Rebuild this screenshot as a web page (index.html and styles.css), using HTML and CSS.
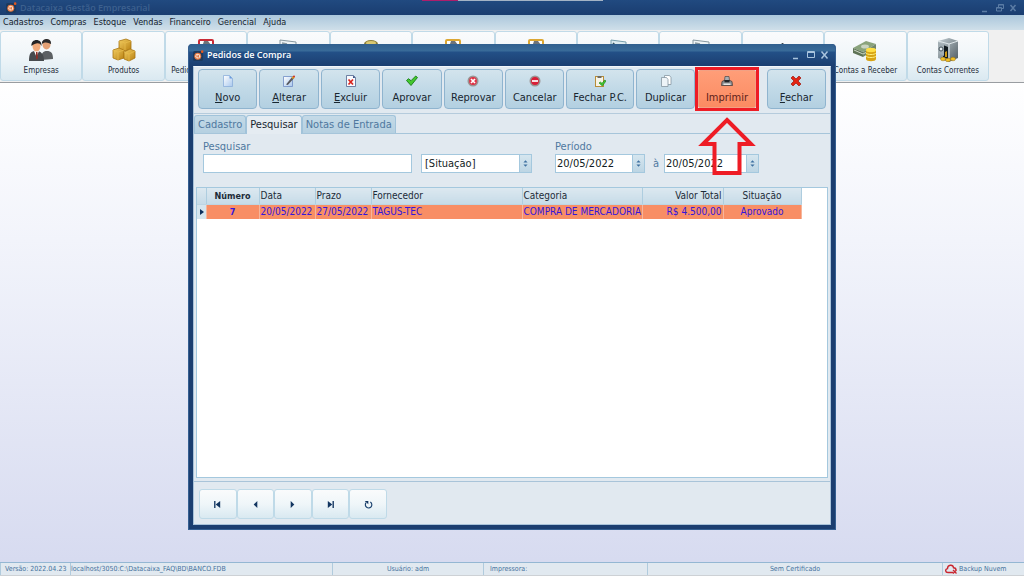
FILE: index.html
```html
<!DOCTYPE html>
<html lang="pt-BR">
<head>
<meta charset="utf-8">
<title>Datacaixa Gestão Empresarial</title>
<link rel="stylesheet" href="styles.css">
</head>
<body>
<svg class="defs" aria-hidden="true">
  <defs>
    <linearGradient id="gold" x1="0" y1="0" x2="1" y2="1"><stop offset="0" stop-color="#f3cf63"/><stop offset="1" stop-color="#b87f10"/></linearGradient>
    <linearGradient id="steel" x1="0" y1="0" x2="1" y2="1"><stop offset="0" stop-color="#c5d0d5"/><stop offset="1" stop-color="#4d5a61"/></linearGradient>
    <linearGradient id="paper" x1="0" y1="0" x2="1" y2="1"><stop offset="0" stop-color="#ffffff"/><stop offset="1" stop-color="#a9c8ee"/></linearGradient>
    <symbol id="logo" viewBox="0 0 12 12"><rect x="0" y="1" width="11" height="11" rx="2" fill="#1d3a5e"/><circle cx="5.2" cy="6.8" r="3.8" fill="#e9773e"/><circle cx="5.2" cy="6.8" r="2.6" fill="#fbe3d3"/><path d="M4.3 5.2v3.2M6 5.2v3.2M4 6.8h2.6" stroke="#dc6a35" stroke-width=".8"/><circle cx="10" cy="1.8" r="1.4" fill="#e2571f"/></symbol>
    <symbol id="clip" viewBox="0 0 24 24"><rect x="5" y="2" width="14" height="20" rx="1" fill="#fff" stroke="currentColor" stroke-width="2"/><path d="M9 6l1-3h4l3 4z" fill="#6e747a"/></symbol>
    <symbol id="sheet" viewBox="0 0 24 24"><path d="M4 2l16 2v18H4z" fill="#eef4f6" stroke="#8798a0"/><path d="M6 5l5 1M13 7h5M6 10h12" stroke="#8798a0" stroke-width="1.5"/></symbol>
    <symbol id="spin" viewBox="0 0 6 8"><path d="M3 0L5.5 2.8h-5zM3 8L.5 5.2h5z" fill="#3e70a0"/></symbol>
  </defs>
</svg>

<header class="app-title">
  <svg class="logo"><use href="#logo"/></svg>
  <h1>Datacaixa Gestão Empresarial</h1>
  <svg class="win-controls dim" viewBox="0 0 36 10"><path d="M0 8.500h5" stroke-width="1.500"/><path d="M16.500 4V1.500h5v4h-2M14.500 4.500h5v3.500h-5zM14.500 5h5M16.500 2h5" fill="none"/><path d="M28.500 2l5 6M33.500 2l-5 6" stroke-width="1.500"/></svg>
  <span class="share-strip"></span>
</header>

<nav class="menu">
  <a href="#">Cadastros</a><a href="#">Compras</a><a href="#">Estoque</a><a href="#">Vendas</a><a href="#">Financeiro</a><a href="#">Gerencial</a><a href="#">Ajuda</a>
</nav>

<div class="toolbar">
  <button type="button">
    <svg viewBox="0 0 24 24"><path d="M12 22c0-7 2-9 6-9s6 2 6 8z" fill="#5c6063"/><ellipse cx="17.500" cy="6.500" rx="4" ry="5" fill="#e3a176"/><path d="M13 6c-1-6 10-7 9 0-3-1-5-3-9 0z" fill="#2b2a2b"/><path d="M0 23c0-8 2-10 7-10s8 3 8 10z" fill="#474b4e"/><path d="M5 13l2.500 6 2.500-6z" fill="#fff"/><path d="M7 14h1.500l.5 6-1.200 2L7 20z" fill="#8c3029"/><ellipse cx="7.500" cy="8" rx="4" ry="5.500" fill="#f0aa7b"/><path d="M2.500 8c-1-8 11-8 10 0-2-4-6-3-10 0z" fill="#242426"/></svg>
    Empresas</button>
  <button type="button">
    <svg viewBox="0 0 24 24"><g fill="url(#gold)" stroke="#a87510" stroke-width=".8"><path d="M7 3l7-2 5 2v8l-6 2-6-2z"/><path d="M1 12l6-2 5 2v8l-6 2-5-2z"/><path d="M12 14l6-3 5 2v7l-6 3-5-2z"/></g><path d="M7 3l6 2 6-2M13 5v7M1 12l5 2 6-2M6 14v8M12 14l5 2 6-3M17 16v7" fill="none" stroke="#e9bd4d" stroke-width=".8"/></svg>
    Produtos</button>
  <button type="button"><svg class="red" viewBox="0 0 24 24"><use href="#clip"/></svg>Pedidos de Compra</button>
  <button type="button" aria-label="Documento"><svg><use href="#sheet"/></svg></button>
  <button type="button" aria-label="Moedas"><svg viewBox="0 0 24 24"><ellipse cx="12" cy="6" rx="7" ry="4" fill="#8c7f3a"/><ellipse cx="12" cy="5" rx="5" ry="2" fill="#d9c872"/></svg></button>
  <button type="button" aria-label="Lista"><svg class="amber"><use href="#clip"/></svg></button>
  <button type="button" aria-label="Lista de itens"><svg class="amber"><use href="#clip"/></svg></button>
  <button type="button" aria-label="Nota"><svg viewBox="0 0 24 24"><path d="M5 2l15 2v18H5z" fill="#dcebf0" stroke="#78a0ae"/><path d="M7 5l3 3 8-1" stroke="#37545e" stroke-width="1.500" fill="none"/></svg></button>
  <button type="button" aria-label="Relatório"><svg><use href="#sheet"/></svg></button>
  <button type="button" aria-label="Contas"><svg viewBox="0 0 24 24"><path d="M4 14l7-9h1l8 9z" fill="#3b454c"/></svg></button>
  <button type="button">
    <svg viewBox="0 0 24 24"><path d="M0 10l13-7 10 3-13 8z" fill="#8aa37c"/><path d="M0 10l10 4v5L0 15z" fill="#5e7356"/><path d="M10 14l13-8v5l-13 8z" fill="#71866a"/><ellipse cx="12" cy="8.500" rx="4" ry="2" fill="#c9d4c0"/><path d="M1 12l9 4 6-3" stroke="#ccd6c4" fill="none"/><path d="M13 12v9c0 3 10 3 10 0v-9z" fill="#d8a414"/><path d="M13 15c1 2 9 2 10 0M13 18c1 2 9 2 10 0" stroke="#fff07e" fill="none"/><ellipse cx="18" cy="12" rx="5" ry="2.200" fill="#ffdf45"/></svg>
    Contas a Receber</button>
  <button type="button">
    <svg viewBox="0 0 24 24"><path d="M2 3l11-3 9 3v17l-9 4-11-4z" fill="url(#steel)"/><path d="M2 3l11 3 9-3M13 6v17" stroke="#dfe7ea" fill="none"/><path d="M7 7l5 2v12l-5-2z" fill="#111a1e"/><path d="M2 4l6 3v11l-6-3z" fill="#a1adb3"/><circle cx="5" cy="11" r="2" fill="#e7eef0" stroke="#44525a"/><path d="M9 14l2-1v6H9z" fill="#c99411"/><g fill="#f1bf24" stroke="#9b6e08" stroke-width=".5"><ellipse cx="7" cy="21" rx="2.500" ry="1.800"/><ellipse cx="12" cy="22" rx="2.500" ry="1.800"/><ellipse cx="17" cy="21" rx="2.500" ry="1.800"/></g></svg>
    Contas Correntes</button>
</div>

<main class="desktop"></main>

<section class="dialog" role="dialog" aria-labelledby="dialog-title">
  <header class="dialog-title">
    <svg class="logo"><use href="#logo"/></svg>
    <h2 id="dialog-title">Pedidos de Compra</h2>
    <svg class="win-controls" viewBox="0 0 36 10"><path d="M0 8.500h5" stroke-width="1.500"/><path d="M14.500 1.500h7v6h-7zM14.500 2.500h7" fill="none"/><path d="M28.500 1.500l6 7M34.500 1.500l-6 7" stroke-width="1.500"/></svg>
  </header>

  <div class="dialog-body">
    <div class="actions">
      <button type="button"><svg viewBox="0 0 12 12"><path d="M1.500.5h6l3 3v8h-9z" fill="url(#paper)" stroke="#8cafdb" stroke-width=".8"/><path d="M7.500.5v3h3z" fill="#6b9bdc"/></svg><span><u>N</u>ovo</span></button>
      <button type="button"><svg viewBox="0 0 12 12"><path d="M.5 1.500h9v10h-9z" fill="url(#paper)" stroke="#6e8cc4" stroke-width=".8"/><path d="M3 9.500L9.500 1.500l1.800 1.400-6.500 7.200z" fill="#58595f"/><path d="M8.500 2.800L10 1l1.600 1.400-1.500 1.700z" fill="#e5a327"/><circle cx="11" cy="1.500" r="1" fill="#cf2c1f"/></svg><span><u>A</u>lterar</span></button>
      <button type="button"><svg viewBox="0 0 12 12"><path d="M1.500.5h7l2 2v9h-9z" fill="#f8fafe" stroke="#51648f" stroke-width=".8"/><path d="M8 .5v2.500h2.500z" fill="#3b5287"/><path d="M3.500 4.500l4.500 5M8 4.500l-4.500 5" stroke="#d8231d" stroke-width="1.700"/></svg><span><u>E</u>xcluir</span></button>
      <button type="button"><svg viewBox="0 0 12 12"><path d="M.5 5.500l2-1.800 2.500 2L9.700 1l1.800 1.500L5 10.500z" fill="#43c82e" stroke="#197b16" stroke-width=".9"/></svg><span>Aprovar</span></button>
      <button type="button"><svg viewBox="0 0 12 12"><circle cx="6" cy="6" r="5.500" fill="#9a9493"/><circle cx="6" cy="6" r="3.900" fill="#df3346"/><path d="M4 4l4 4M8 4L4 8" stroke="#fff" stroke-width="1.700"/></svg><span>Reprovar</span></button>
      <button type="button"><svg viewBox="0 0 12 12"><circle cx="6" cy="6" r="5.500" fill="#9a9493"/><circle cx="6" cy="6" r="3.900" fill="#d91f37"/><path d="M3 6h6" stroke="#fff" stroke-width="1.700"/></svg><span>Cancelar</span></button>
      <button type="button" class="wide"><svg viewBox="0 0 12 12"><rect x="1.500" y="1.500" width="8" height="10" fill="#f7f4e6" stroke="#b88d38"/><path d="M3.500 3V1h4v2z" fill="#6f6b62"/><path d="M5 8l1.300-1L8 8.300 10.800 5 12 6 8.300 11z" fill="#43c82e" stroke="#197b16" stroke-width=".6"/></svg><span>Fechar P.C.</span></button>
      <button type="button"><svg viewBox="0 0 12 12"><path d="M4.500.5h5l1.500 2v7H4.500z" fill="#fff" stroke="#8697a2" stroke-width=".8"/><path d="M1.500 2.500h5l1.500 2v7H1.500z" fill="#eef4f8" stroke="#8697a2" stroke-width=".8"/></svg><span>Duplicar</span></button>
      <div class="highlight">
        <button type="button"><svg viewBox="0 0 12 12"><path d="M4 1.500h4l.5 4h-5z" fill="#a9adb2" stroke="#474747" stroke-width=".7"/><path d="M1 6.500l2-1h6l2 1 .5 4H.5z" fill="#8d8f92" stroke="#3c3433" stroke-width=".7"/><path d="M3.500 5h5v2.300h-5z" fill="#26262a"/><path d="M2.500 8.500h7v1.500h-7z" fill="#e6e6e6"/></svg><span>Imprimir</span></button>
        <svg class="arrow" viewBox="0 0 62 60"><path d="M31 4L55 28H43.500V57h-25V28H7z" fill="none" stroke="#ee1c25" stroke-width="4"/></svg>
      </div>
      <button type="button"><svg viewBox="0 0 12 12"><path d="M1 3L3 1l3 3 3-3 2 2-3 3 3 3-2 2-3-3-3 3-2-2 3-3z" fill="#e32413" stroke="#9d170b" stroke-width=".7"/></svg><span><u>F</u>echar</span></button>
    </div>

    <div class="tabs" role="tablist">
      <button type="button" role="tab">Cadastro</button>
      <button type="button" role="tab" class="active" aria-selected="true">Pesquisar</button>
      <button type="button" role="tab">Notas de Entrada</button>
    </div>

    <div class="panel">
      <form class="filters">
        <div class="field search"><label for="q">Pesquisar</label><input id="q" type="text"></div>
        <div class="field status"><div class="box"><select aria-label="Situação"><option>[Situação]</option></select><svg class="spin"><use href="#spin"/></svg></div></div>
        <div class="field from"><label for="from">Período</label><div class="box"><input id="from" type="text" value="20/05/2022"><button type="button" class="spin" aria-label="Ajustar data inicial"><svg><use href="#spin"/></svg></button></div></div>
        <label class="until" for="to">à</label>
        <div class="field to"><div class="box"><input id="to" type="text" value="20/05/2022"><button type="button" class="spin" aria-label="Ajustar data final"><svg><use href="#spin"/></svg></button></div></div>
      </form>

      <div class="grid">
        <table>
          <colgroup><col class="c-mark"><col class="c-num"><col class="c-date"><col class="c-date"><col class="c-supplier"><col class="c-category"><col class="c-value"><col class="c-status"></colgroup>
          <thead><tr><th></th><th class="num">Número</th><th>Data</th><th>Prazo</th><th>Fornecedor</th><th>Categoria</th><th class="value">Valor Total</th><th class="center">Situação</th></tr></thead>
          <tbody><tr><td class="mark"><svg viewBox="0 0 4 6"><path d="M0 0l4 3-4 3z" fill="#0b2f5c"/></svg></td><td class="num">7</td><td>20/05/2022</td><td>27/05/2022</td><td>TAGUS-TEC</td><td>COMPRA DE MERCADORIA</td><td class="value">R$ 4.500,00</td><td class="center">Aprovado</td></tr></tbody>
        </table>
      </div>
    </div>

    <div class="pager">
      <button type="button" aria-label="Primeiro"><svg viewBox="0 0 10 10"><path d="M2 1v8" stroke="#123560" stroke-width="1.500"/><path d="M8 1v8L3 5z"/></svg></button>
      <button type="button" aria-label="Anterior"><svg viewBox="0 0 10 10"><path d="M7 1v8L3 5z"/></svg></button>
      <button type="button" aria-label="Próximo"><svg viewBox="0 0 10 10"><path d="M3 1v8l4-4z"/></svg></button>
      <button type="button" aria-label="Último"><svg viewBox="0 0 10 10"><path d="M8 1v8" stroke="#123560" stroke-width="1.500"/><path d="M2 1v8l5-4z"/></svg></button>
      <button type="button" aria-label="Atualizar"><svg viewBox="0 0 10 10"><path d="M7 2.200A3.600 3.600 0 1 1 2.300 3" fill="none" stroke="#1d4470" stroke-width="1.300"/><path d="M.8 1h4v3.800z"/></svg></button>
    </div>
  </div>
</section>

<footer class="status-bar">
  <span class="s-version">Versão: 2022.04.23</span>
  <span class="s-path">localhost/3050:C:\Datacaixa_FAQ\BD\BANCO.FDB</span>
  <span class="s-user">Usuário: adm</span>
  <span class="s-printer">Impressora:</span>
  <span class="s-cert">Sem Certificado</span>
  <span class="s-backup"><svg viewBox="0 0 12 10"><path d="M8 8.500H3C0 8.500 0 5 2.500 4.600 2.500.5 8 0 8.500 3.700c2 0 2.500 1.300 2.500 2.300" fill="none" stroke="#c9262f" stroke-width="1.400"/><path d="M8 6l3.500 3.500M11.500 6L8 9.500" stroke="#c9262f" stroke-width="1.300"/></svg>Backup Nuvem</span>
</footer>
</body>
</html>
```
FILE: styles.css
```css
* { box-sizing: border-box; }

body {
  margin: 0;
  min-height: 100vh;
  display: flex;
  flex-direction: column;
  position: relative;
  font-family: "DejaVu Sans Condensed", "DejaVu Sans", sans-serif;
  font-size: 9px;
  color: #1c2b38;
  background: linear-gradient(#ffffff 80px, #f2f4fb 240px, #d7dbf0 560px);
}

button, input, select { font: inherit; color: inherit; margin: 0; }
h1, h2 { margin: 0; font-family: "Open Sans", "Noto Sans", sans-serif; font-size: 9px; font-weight: 600; line-height: 12px; }
.defs { position: absolute; width: 0; height: 0; }

.app-title {
  position: relative;
  display: flex;
  align-items: center;
  height: 15px;
  padding: 0 6px;
  background: linear-gradient(#214a80, #1a3d70);
}
.app-title h1 { color: #3d618f; }
.logo { width: 11px; height: 11px; flex: none; margin-right: 3px; }
.win-controls { width: 36px; height: 10px; margin-left: auto; stroke: #a9c4de; }
.win-controls.dim { stroke: #5b7ca5; }
.share-strip {
  position: absolute;
  top: 0;
  left: 422px;
  width: 181px;
  height: 1px;
  background: linear-gradient(90deg, #ad1e6b 36px, #a3b3c5 36px);
}

.menu {
  display: flex;
  gap: 7px;
  height: 15px;
  padding: 0 3px;
  line-height: 15px;
  background: linear-gradient(#abc7dc, #cfdfe9);
}
.menu a { color: #14212c; text-decoration: none; }

.toolbar {
  display: flex;
  height: 53px;
  padding: 1px 35px 1px 0;
  background: #f0f0f0;
  border-bottom: 1px solid #999da1;
}
.toolbar button {
  flex: 1 1 0;
  min-width: 0;
  display: flex;
  flex-direction: column;
  align-items: center;
  justify-content: flex-start;
  padding: 6px 0 0;
  font-size: 8px;
  line-height: 12px;
  white-space: nowrap;
  border: 1px solid #c0dae8;
  border-radius: 3px;
  background: linear-gradient(#fafbfc, #f0f6f9 50%, #dae9f1);
}
.toolbar svg { width: 24px; height: 24px; margin-bottom: 3px; flex: none; }
.toolbar svg.red { color: #c92b36; }
.toolbar svg.amber { color: #dca733; }

.desktop { flex: 1; }

.dialog {
  position: absolute;
  inset: 44px 188px 46px 188px;
  display: flex;
  flex-direction: column;
  padding: 0 4px 4px;
  border-radius: 4px 4px 0 0;
  background: #1b3e70;
  border: 1px solid #355f91;
  border-top: 0;
}
.dialog-title {
  display: flex;
  align-items: center;
  height: 22px;
  flex: none;
  margin: 0 -4px;
  padding: 0 6px 0 4px;
  border-radius: 4px 4px 0 0;
  background: linear-gradient(#31608f, #396b99 7px, #235087 8px, #1b3e70);
}
.dialog-title h2 { color: #fff; }

.dialog-body {
  flex: 1;
  display: flex;
  flex-direction: column;
  min-height: 0;
  background: #e1e9f0;
  border: 1px solid #a8c2d9;
  border-top-color: #f1f6fa;
}

.actions {
  display: flex;
  gap: 2px;
  padding: 2px 4px 4px;
  border-bottom: 1px solid #b5cbdc;
}
.actions button {
  flex: 1 1 59px;
  height: 40px;
  display: flex;
  flex-direction: column;
  align-items: center;
  gap: 3px;
  padding: 5px 0 0;
  font-size: 11px;
  line-height: 16px;
  color: #182630;
  white-space: nowrap;
  border: 1px solid #8fb4cf;
  border-radius: 4px;
  background: linear-gradient(#d3e4ed, #c1d9e7 50%, #b3d0e1);
}
.actions button.wide { flex-basis: 67px; }
.actions svg { width: 12px; height: 12px; flex: none; }
.actions .highlight {
  position: relative;
  flex: 1 1 63px;
  display: flex;
  margin: -2px 6px -2px -2px;
  border: 3px solid #ee1c25;
}
.actions .highlight button {
  flex: 1;
  height: 38px;
  padding-top: 4px;
  color: #5d221b;
  border-color: #f2a184;
  border-radius: 2px;
  background: linear-gradient(#ff9d78, #fb8b62);
}
.actions .arrow {
  position: absolute;
  z-index: 2;
  top: 46px;
  left: -2px;
  width: 62px;
  height: 60px;
  pointer-events: none;
}

.tabs {
  display: flex;
  align-items: flex-end;
  height: 20px;
  flex: none;
  border-bottom: 1px solid #a6c5da;
}
.tabs button {
  height: 18px;
  padding: 0 3px;
  font-size: 11px;
  line-height: 16px;
  color: #4f789f;
  border: 1px solid #a1c3da;
  border-bottom: 0;
  border-radius: 3px 3px 0 0;
  background: linear-gradient(#c5dae7, #b5d0e1);
}
.tabs .active {
  height: 19px;
  margin-bottom: -1px;
  color: #182630;
  background: #e5ecf2;
}

.panel {
  flex: 1;
  min-height: 0;
  display: flex;
  flex-direction: column;
  padding: 6px 2px 3px;
  border-bottom: 1px solid #a9c4d9;
}
.filters {
  display: flex;
  align-items: flex-end;
  padding: 0 7px;
  margin-bottom: 14px;
  font-size: 11px;
}
.filters label { display: block; line-height: 14px; color: #4f789f; }
.filters input, .filters select {
  width: 100%;
  min-width: 0;
  height: 19px;
  padding: 0 3px;
  border: 1px solid #a4c8de;
  border-radius: 0;
  background: #fff;
  color: #111b22;
  appearance: none;
}
.box { position: relative; display: flex; }
.box input { padding: 0 1px; border-right: 0; }
.box .spin {
  flex: none;
  width: 13px;
  height: 19px;
  padding: 5px 3px;
  border: 1px solid #a4c8de;
  background: linear-gradient(#d6e6ef, #bcd5e4);
}
.box .spin svg { display: block; width: 5px; height: 7px; }
.box svg.spin { position: absolute; right: 0; top: 0; pointer-events: none; }
.search { width: 209px; margin-right: 9px; }
.status { width: 111px; margin-right: 23px; }
.from { width: 90px; }
.filters .until { width: 19px; padding-left: 3px; text-align: center; line-height: 19px; }
.to { width: 95px; }

.grid {
  flex: 1;
  min-height: 0;
  border: 1px solid #a4c8de;
  background: #fff;
}
table { border-collapse: collapse; table-layout: fixed; width: 604px; font-size: 10px; }
.c-mark { width: 9px; }
.c-num { width: 53px; }
.c-date { width: 56px; }
.c-supplier { width: 151px; }
.c-category { width: 120px; }
.c-value { width: 81px; }
.c-status { width: 78px; }
th, td {
  height: 15px;
  padding: 0 1px;
  line-height: 14px;
  text-align: left;
  white-space: nowrap;
  border-right: 1px solid #aecddf;
}
th {
  height: 16px;
  font-weight: normal;
  background: linear-gradient(#dce8f0, #c6dbe8);
  border-bottom: 1px solid #bdd5e3;
}
td { color: #3316dc; background: #f88e65; border-right-color: #f5b69c; }
th.num, td.num { font-size: 9px; font-weight: bold; text-align: center; }
.value { text-align: right; }
.center { text-align: center; }
td.mark { background: #d5e5ee; padding: 0 0 0 3px; }
.mark svg { display: block; width: 4px; height: 6px; }

.pager {
  display: flex;
  width: 198px;
  padding: 7px 5px 5px;
}
.pager button {
  flex: 1;
  height: 30px;
  padding: 0;
  display: grid;
  place-items: center;
  border: 1px solid #bfdae8;
  border-radius: 3px;
  background: linear-gradient(#fafbfc, #eff6f9 50%, #d9e9f1);
}
.pager svg { width: 9px; height: 9px; fill: #123560; }

.status-bar {
  display: flex;
  height: 14px;
  font-size: 7px;
  line-height: 13px;
  color: #46729d;
  background: #e1e9f0;
  border-top: 1px solid #94b7d3;
  border-bottom: 1px solid #cdd1d5;
}
.status-bar span { white-space: nowrap; border-left: 1px solid #b0cbdd; }
.s-version { width: 70px; padding-left: 4px; }
.s-path { width: 262px; }
.s-user { width: 151px; text-align: center; }
.s-printer { width: 164px; padding-left: 6px; }
.s-cert { flex: 1; text-align: center; }
.s-backup { width: 82px; padding-left: 2px; display: flex; align-items: center; gap: 2px; }
.s-backup svg { width: 12px; height: 10px; }
```
